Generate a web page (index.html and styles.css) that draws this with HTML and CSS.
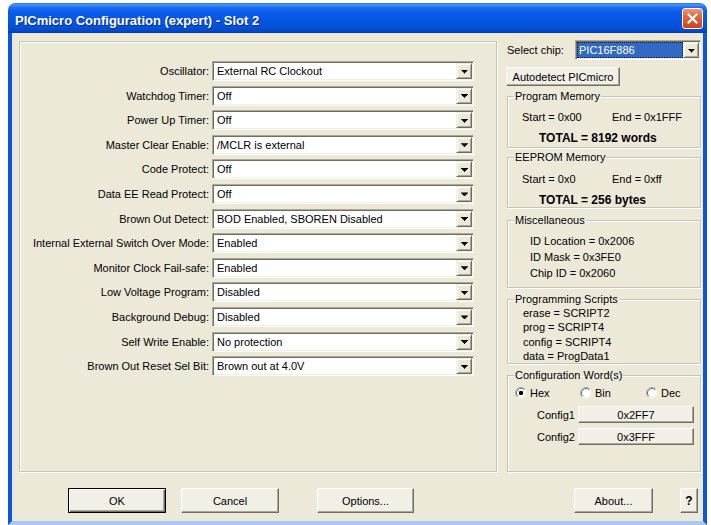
FILE: index.html
```html
<!DOCTYPE html>
<html lang="en">
<head>
<meta charset="utf-8">
<title>PICmicro Configuration (expert) - Slot 2</title>
<link rel="stylesheet" href="styles.css">
</head>
<body>
<div class="window">
  <div class="titlebar">
    <span class="title">PICmicro Configuration (expert) - Slot 2</span>
    <span class="close" aria-label="Close">
      <svg width="19" height="19" viewBox="0 0 19 19"><path d="M5.5 5.5L13.5 13.5M13.5 5.5L5.5 13.5" stroke="#fff" stroke-width="2.2" stroke-linecap="square"/></svg>
    </span>
  </div>

  <div class="client">
    <div class="main">
      <div class="settings">
        <label>Oscillator:</label>
        <div class="combo"><span class="value">External RC Clockout</span><span class="drop"></span></div>
        <label>Watchdog Timer:</label>
        <div class="combo"><span class="value">Off</span><span class="drop"></span></div>
        <label>Power Up Timer:</label>
        <div class="combo"><span class="value">Off</span><span class="drop"></span></div>
        <label>Master Clear Enable:</label>
        <div class="combo"><span class="value">/MCLR is external</span><span class="drop"></span></div>
        <label>Code Protect:</label>
        <div class="combo"><span class="value">Off</span><span class="drop"></span></div>
        <label>Data EE Read Protect:</label>
        <div class="combo"><span class="value">Off</span><span class="drop"></span></div>
        <label>Brown Out Detect:</label>
        <div class="combo"><span class="value">BOD Enabled, SBOREN Disabled</span><span class="drop"></span></div>
        <label>Internal External Switch Over Mode:</label>
        <div class="combo"><span class="value">Enabled</span><span class="drop"></span></div>
        <label>Monitor Clock Fail-safe:</label>
        <div class="combo"><span class="value">Enabled</span><span class="drop"></span></div>
        <label>Low Voltage Program:</label>
        <div class="combo"><span class="value">Disabled</span><span class="drop"></span></div>
        <label>Background Debug:</label>
        <div class="combo"><span class="value">Disabled</span><span class="drop"></span></div>
        <label>Self Write Enable:</label>
        <div class="combo"><span class="value">No protection</span><span class="drop"></span></div>
        <label>Brown Out Reset Sel Bit:</label>
        <div class="combo"><span class="value">Brown out at 4.0V</span><span class="drop"></span></div>
      </div>

      <div class="side">
        <div class="chip-row">
          <span>Select chip:</span>
          <div class="combo chip"><span class="value"><span class="sel">PIC16F886</span></span><span class="drop"></span></div>
        </div>
        <button class="btn auto">Autodetect PICmicro</button>

        <fieldset class="pm">
          <legend>Program Memory</legend>
          <div class="range"><span>Start = 0x00</span><span>End = 0x1FFF</span></div>
          <div class="total">TOTAL = 8192 words</div>
        </fieldset>

        <fieldset class="ee">
          <legend>EEPROM Memory</legend>
          <div class="range"><span>Start = 0x0</span><span>End = 0xff</span></div>
          <div class="total">TOTAL = 256 bytes</div>
        </fieldset>

        <fieldset class="misc">
          <legend>Miscellaneous</legend>
          <div>ID Location = 0x2006</div>
          <div>ID Mask = 0x3FE0</div>
          <div>Chip ID = 0x2060</div>
        </fieldset>

        <fieldset class="scripts">
          <legend>Programming Scripts</legend>
          <div>erase = SCRIPT2</div>
          <div>prog = SCRIPT4</div>
          <div>config = SCRIPT4</div>
          <div>data = ProgData1</div>
        </fieldset>

        <fieldset class="words">
          <legend>Configuration Word(s)</legend>
          <div class="radios">
            <span class="radio">
              <svg width="12" height="12" viewBox="0 0 12 12"><circle cx="6" cy="6" r="5.5" fill="#fff"/><path d="M9.9 2.1A5.5 5.5 0 0 0 2.1 9.9" fill="none" stroke="#ACA899"/><path d="M9.2 2.8A4.5 4.5 0 0 0 2.8 9.2" fill="none" stroke="#716F64"/><path d="M2.8 9.2A4.5 4.5 0 0 0 9.2 2.8" fill="none" stroke="#F1EFE2"/><rect x="4" y="4" width="4" height="4" rx="1.2" fill="#000"/></svg>
              Hex
            </span>
            <span class="radio">
              <svg width="12" height="12" viewBox="0 0 12 12"><circle cx="6" cy="6" r="5.5" fill="#fff"/><path d="M9.9 2.1A5.5 5.5 0 0 0 2.1 9.9" fill="none" stroke="#ACA899"/><path d="M9.2 2.8A4.5 4.5 0 0 0 2.8 9.2" fill="none" stroke="#716F64"/><path d="M2.8 9.2A4.5 4.5 0 0 0 9.2 2.8" fill="none" stroke="#F1EFE2"/></svg>
              Bin
            </span>
            <span class="radio">
              <svg width="12" height="12" viewBox="0 0 12 12"><circle cx="6" cy="6" r="5.5" fill="#fff"/><path d="M9.9 2.1A5.5 5.5 0 0 0 2.1 9.9" fill="none" stroke="#ACA899"/><path d="M9.2 2.8A4.5 4.5 0 0 0 2.8 9.2" fill="none" stroke="#716F64"/><path d="M2.8 9.2A4.5 4.5 0 0 0 9.2 2.8" fill="none" stroke="#F1EFE2"/></svg>
              Dec
            </span>
          </div>
          <div class="word"><span>Config1</span><button class="btn">0x2FF7</button></div>
          <div class="word"><span>Config2</span><button class="btn">0x3FFF</button></div>
        </fieldset>
      </div>
    </div>

    <div class="actions">
      <button class="btn default ok">OK</button>
      <button class="btn cancel">Cancel</button>
      <button class="btn options">Options...</button>
      <button class="btn about">About...</button>
      <button class="btn help">?</button>
    </div>
  </div>
</div>
</body>
</html>
```

FILE: styles.css
```css
* {
  box-sizing: border-box;
}

html {
  background: #fff;
}

body {
  margin: 3px 0 0 8px;
  font-family: "Liberation Sans", Arial, sans-serif;
  font-size: 11px;
  color: #000;
}

/* ---------- window frame ---------- */
.window {
  width: 699px;
  height: 522px;
  display: flex;
  flex-direction: column;
}

.titlebar {
  flex: none;
  height: 30px;
  display: flex;
  align-items: center;
  padding: 0 4px 0 7px;
  border-radius: 7px 7px 0 0;
  background: linear-gradient(to bottom,
    #2A6FE8 0%, #4C95F8 6%, #2070F2 14%, #0A5CEC 30%,
    #0656E4 55%, #0451D8 80%, #0348C6 94%, #033BA8 100%);
}

.title {
  flex: 1;
  padding-top: 4px;
  color: #fff;
  font-size: 13px;
  font-weight: bold;
  text-shadow: 1px 1px 0 #0B2D8F;
  white-space: nowrap;
}

.close {
  width: 21px;
  height: 21px;
  display: flex;
  align-items: center;
  justify-content: center;
  border: 1px solid #fff;
  border-radius: 3px;
  background: linear-gradient(to bottom, #EC9A7E 0%, #E4683F 35%, #D9532A 70%, #C8441E 100%);
}

.client {
  flex: 1;
  display: flex;
  flex-direction: column;
  background: #ECE9D8;
  border: 4px solid #0B55E0;
  border-top: 0;
  border-bottom-color: #A9C9F3;
}

.main {
  height: 439px;
  padding-top: 7px;
  display: flex;
}

/* ---------- left: fuse settings ---------- */
.settings {
  margin: 1px 0 0 7px;
  width: 478px;
  border: 1px solid #C7C4B4;
  box-shadow: inset 1px 1px 0 #fff, 1px 1px 0 #fff;
  padding-top: 19px;
  display: grid;
  grid-template-columns: 189px 262px;
  grid-auto-rows: 20px;
  column-gap: 3px;
  row-gap: 4.6px;
  align-content: start;
  align-items: center;
}

.settings label {
  text-align: right;
  white-space: nowrap;
}

/* classic sunken drop-down list */
.combo {
  height: 20px;
  display: flex;
  padding: 1px;
  background: #fff;
  border: 1px solid;
  border-color: #ACA899 #fff #fff #ACA899;
  box-shadow: inset 1px 1px 0 #716F64, inset -1px -1px 0 #F1EFE2;
}

.combo .value {
  flex: 1;
  padding-left: 3px;
  line-height: 16px;
  white-space: nowrap;
  overflow: hidden;
}

.drop {
  flex: none;
  width: 16px;
  height: 16px;
  display: flex;
  align-items: center;
  justify-content: center;
  background: #ECE9D8;
  border: 1px solid;
  border-color: #F1EFE2 #716F64 #716F64 #F1EFE2;
  box-shadow: inset 1px 1px 0 #fff, inset -1px -1px 0 #ACA899;
}

.drop::after {
  content: "";
  width: 7px;
  height: 4px;
  margin: 1px 0 0 1px;
  background: #000;
  clip-path: polygon(0 0, 7px 0, 7px 1px, 6px 1px, 6px 2px, 5px 2px, 5px 3px, 4px 3px,
    4px 4px, 3px 4px, 3px 3px, 2px 3px, 2px 2px, 1px 2px, 1px 1px, 0 1px);
}

/* ---------- right: chip information ---------- */
.side {
  width: 196px;
  margin-left: 9px;
  display: flex;
  flex-direction: column;
}

.chip-row {
  height: 20px;
  display: flex;
  align-items: center;
  padding-left: 1px;
}

.chip {
  width: 126px;
  margin-left: auto;
  margin-right: 1px;
}

.chip .value {
  padding-left: 0;
}

.chip .sel {
  display: block;
  height: 16px;
  padding-left: 2px;
  background: #316AC5;
  color: #fff;
  outline: 1px dotted #1B1B1B;
  outline-offset: -1px;
}

/* push buttons */
.btn {
  font: inherit;
  color: #000;
  padding: 0;
  background: #F1EFE6;
  border: 1px solid;
  border-color: #fff #716F64 #716F64 #fff;
  box-shadow: inset -1px -1px 0 #ACA899;
  cursor: default;
}

.btn.default {
  border-color: #000;
  box-shadow: inset 1px 1px 0 #fff, inset -1px -1px 0 #716F64, inset -2px -2px 0 #ACA899;
}

.auto {
  width: 114px;
  height: 19px;
  margin-top: 7px;
}

fieldset {
  margin: 0 1px;
  padding: 0;
  min-width: 0;
  border: 1px solid #C7C4B4;
  box-shadow: inset 1px 1px 0 #fff, 1px 1px 0 #fff;
}

legend {
  margin-left: 6px;
  padding: 0 1px;
  line-height: 13px;
}

.range {
  display: grid;
  grid-template-columns: 90px auto;
  padding-left: 14px;
  line-height: 14px;
}

.total {
  padding-left: 31px;
  margin-top: 7px;
  line-height: 14px;
  font-size: 12px;
  font-weight: bold;
}

.pm {
  margin-top: 4px;
  padding: 7px 0 2px;
}

.ee {
  margin-top: 3px;
  padding: 8px 0 0;
}

.misc {
  margin-top: 6px;
  padding: 6px 0;
  line-height: 16px;
}

.misc > div {
  padding-left: 22px;
}

.scripts {
  margin-top: 5px;
  line-height: 14.3px;
}

.scripts > div {
  padding-left: 15px;
}

.words {
  margin-top: 5px;
  flex: 1;
  padding: 4px 0 0;
}

.radios {
  display: grid;
  grid-template-columns: 65px 66px auto;
  padding-left: 7px;
  line-height: 14px;
}

.radio {
  display: flex;
  align-items: center;
  gap: 3px;
}

.word {
  display: grid;
  grid-template-columns: 41px 116px;
  align-items: center;
  padding-left: 29px;
  margin-top: 6px;
}

.word + .word {
  margin-top: 5px;
}

.word .btn {
  height: 17px;
}

/* ---------- dialog buttons ---------- */
.actions {
  height: 25px;
  margin-top: 16px;
  padding-left: 56px;
  display: flex;
}

.actions .btn {
  width: 98px;
  height: 25px;
}

.cancel {
  margin-left: 15px;
}

.actions .options {
  width: 97px;
  margin-left: 38px;
}

.actions .about {
  width: 79px;
  margin-left: 160px;
}

.actions .help {
  width: 18px;
  margin-left: 27px;
  font-weight: bold;
  font-size: 12px;
}
```
